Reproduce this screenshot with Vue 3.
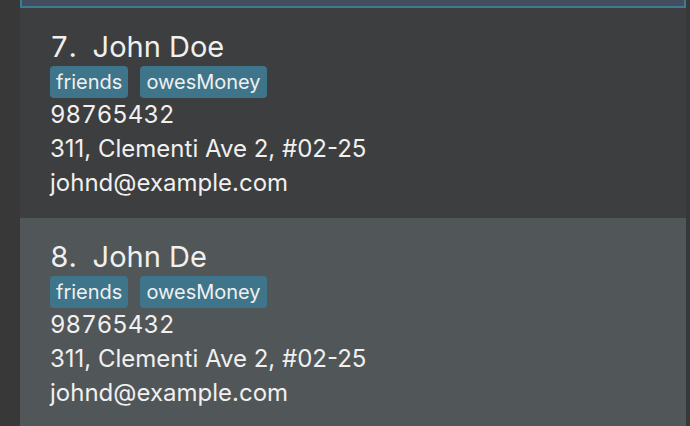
<script setup>
const people = [
  { id: 7, name: 'John Doe' },
  { id: 8, name: 'John De' },
].map((p) => ({
  ...p,
  tags: ['friends', 'owesMoney'],
  phone: '98765432',
  address: '311, Clementi Ave 2, #02-25',
  email: 'johnd@example.com',
}))
</script>

<template>
  <main class="panel">
    <div class="selected"></div>
    <ol class="list">
      <li v-for="p in people" :key="p.id" class="card">
        <h2 class="name"><span class="digits">{{ p.id }}.</span><span>{{ p.name }}</span></h2>
        <div class="tags"><span v-for="t in p.tags" :key="t" class="tag">{{ t }}</span></div>
        <p class="line digits">{{ p.phone }}</p>
        <p class="line">{{ p.address }}</p>
        <p class="line">{{ p.email }}</p>
      </li>
    </ol>
  </main>
</template>

<style>
body { background: #383838; }
</style>

<style scoped>
.panel {
  box-sizing: border-box;
  height: 100vh;
  overflow: hidden;
  padding: 0 4px 0 20px;
  font-family: Inter, "Liberation Sans", sans-serif;
  color: #f0f0f0;
}
.selected {
  box-sizing: border-box;
  height: 8px;
  background: #424d5f;
  border: 2px solid #3e7b91;
  border-top: 0;
}
.list { list-style: none; margin: 0; padding: 0; }
.card {
  padding: 20px 30px 18px;
  background: #3c3e3f;
}
.card:nth-child(even) { background: #515658; }
.name {
  display: flex;
  gap: 16px;
  margin: 0;
  font-size: 29px;
  line-height: 38px;
  font-weight: 400;
}
.digits { font-variant-numeric: tabular-nums; }
.tags { display: flex; gap: 12px; }
.tag {
  padding: 0 6px;
  border-radius: 4px;
  background: #3f758a;
  font-size: 20px;
  line-height: 32px;
}
.line { margin: 0; font-size: 24px; line-height: 34px; }
</style>
